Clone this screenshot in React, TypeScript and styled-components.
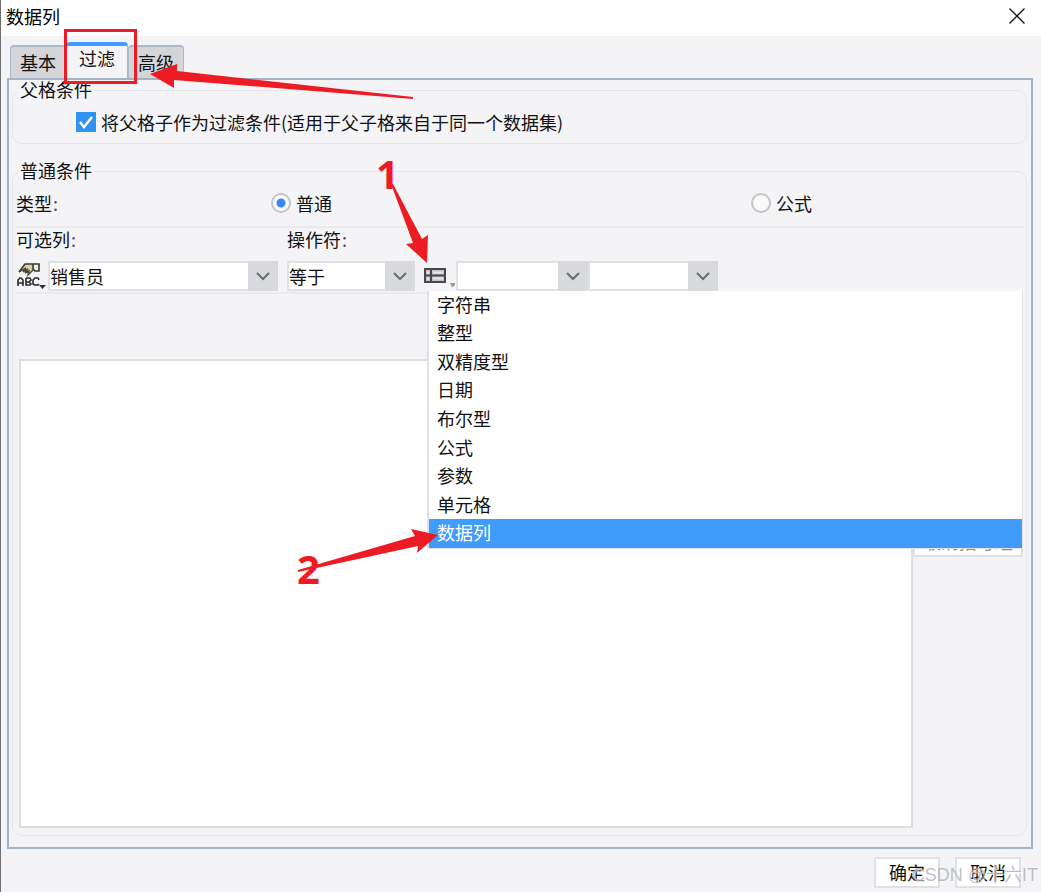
import React, { useState } from "react";
import styled, { createGlobalStyle } from "styled-components";

const RED = "#ed1c24";
const BLUE = "#409bfa";
const LINE = "#e4e5e8";

const GlobalStyle = createGlobalStyle`
  *, *::before, *::after { box-sizing: border-box; }
  body {
    margin: 0;
    background: #f4f4f7;
  }
  body, button, select, input {
    font-family: "Noto Sans CJK SC", sans-serif;
    font-size: 18px;
    line-height: 24px;
    color: #111;
  }
`;

const Window = styled.div`
  position: relative;
  display: flex;
  flex-direction: column;
  min-height: 100vh;
  border-left: 1px solid #6f6f72;
  overflow: hidden;
`;

const TitleBar = styled.header`
  display: flex;
  align-items: center;
  justify-content: space-between;
  height: 36px;
  padding: 0 16px 4px 5px;
  background: #fff;
  color: #000;
`;

const Title = styled.h1`
  margin: 0;
  font-size: 18px;
  font-weight: 400;
`;

const CloseButton = styled.button`
  display: flex;
  padding: 0;
  border: 0;
  background: none;
`;

const TabList = styled.div`
  display: flex;
  align-items: flex-end;
  height: 42px;
  padding-left: 9px;
`;

const Tab = styled.button<{ $active?: boolean }>`
  height: ${(p) => (p.$active ? 36 : 33)}px;
  padding: ${(p) => (p.$active ? "0 12px 8px" : "0 9px 1px")};
  border: 1px solid #a9b8cc;
  border-width: ${(p) => (p.$active ? "4px 1px 0" : "2px 1px 0")};
  border-top-color: ${(p) => (p.$active ? BLUE : "#a9b8cc")};
  border-radius: 4px 4px 0 0;
  background: ${(p) => (p.$active ? "#f4f4f7" : "#d5d5d9")};
`;

const Panel = styled.main`
  flex: 1;
  display: flex;
  flex-direction: column;
  gap: 18px;
  margin: 0 8px 0 6px;
  padding: 1px 4px 11px 3px;
  border: 2px solid #a3b3c8;
`;

const Group = styled.fieldset<{ $grow?: boolean }>`
  flex: ${(p) => (p.$grow ? "1" : "none")};
  min-width: 0;
  margin: 0;
  padding: 0 3px ${(p) => (p.$grow ? 7 : 11)}px;
  border: 1px solid ${LINE};
  border-radius: 10px;
`;

const Legend = styled.legend`
  margin-left: 1px;
  padding: 0 3px 2px;
  line-height: 16px;
`;

const CheckRow = styled.label`
  display: flex;
  align-items: center;
  gap: 5px;
  height: 20px;
  margin: 13px 0 0 60px;
`;

const CheckBox = styled.span`
  display: grid;
  width: 20px;
  height: 20px;

  & > * { grid-area: 1 / 1; }

  input {
    width: 20px;
    height: 20px;
    margin: 0;
    appearance: none;
    background: #fff;
    border: 1px solid #b9bbc0;
  }
  input:checked {
    background: #2f93f2;
    border-color: #2f93f2;
  }
  svg { pointer-events: none; }
`;

const TypeRow = styled.div`
  display: grid;
  grid-template-columns: 255px 480fr 272fr;
  align-items: center;
  height: 48px;
  padding-bottom: 1px;
  border-bottom: 2px solid #e9eaec;
`;

const RadioLabel = styled.label`
  display: flex;
  align-items: center;
  gap: 5px;
`;

const Radio = styled.input`
  width: 20px;
  height: 20px;
  margin: 0;
  appearance: none;
  border: 2px solid #c4c4c7;
  border-radius: 50%;
  background: #fafafb;
  &:checked {
    background: radial-gradient(circle, #3a86f2 0 4px, #fafafb 5px);
  }
`;

const Colon = styled.span`
  margin-left: 1px;
  color: #6b3a78;
`;

const FieldNames = styled.div`
  display: grid;
  grid-template-columns: 271px 1fr;
  height: 33px;
  line-height: 22px;
`;

const Controls = styled.div`
  position: relative;
  display: flex;
  height: 30px;
`;

const ControlsFrame = styled.div`
  padding-bottom: 1px;
  border-bottom: 2px solid #e9eaec;
`;

const IconButton = styled.button`
  display: flex;
  flex: none;
  align-items: center;
  justify-content: center;
  width: 32px;
  height: 30px;
  padding: 0;
  border: 0;
  background: none;
`;

const ComboBox = styled.span<{ $width: number; $gap?: number }>`
  display: grid;
  grid-template-columns: 1fr 30px;
  width: ${(p) => p.$width}px;
  margin-right: ${(p) => p.$gap ?? 0}px;

  select {
    grid-area: 1 / 1 / 2 / 3;
    width: 100%;
    height: 30px;
    padding: 0 30px 1px 0;
    border: 2px solid #e0e1e4;
    border-right-width: 0;
    border-radius: 0;
    background: #fff;
    appearance: none;
  }
`;

const ComboArrow = styled.span`
  grid-area: 1 / 2;
  display: flex;
  align-items: center;
  justify-content: center;
  background: #d8dade;
  pointer-events: none;
`;

const Menu = styled.ul`
  position: absolute;
  z-index: 1;
  top: 100%;
  left: 411px;
  right: 0;
  display: grid;
  grid-template-rows: repeat(9, 1fr);
  height: 258px;
  margin: 0;
  padding: 0;
  list-style: none;
  border: solid #dfe1e5;
  border-width: 0 1px 1px 2px;
  background: #fff;
`;

const MenuItem = styled.li`
  display: grid;
`;

const MenuButton = styled.button<{ $active: boolean }>`
  padding: 0 8px 3px;
  border: 0;
  text-align: left;
  background: ${(p) => (p.$active ? BLUE : "#fff")};
  color: ${(p) => (p.$active ? "#fff" : "#111")};
`;

const Body = styled.div`
  display: flex;
  min-height: calc(100vh - 423px);
  margin: 65px 0 0 3px;
`;

const ConditionList = styled.div`
  flex: 1;
  border: 2px solid #dddee2;
  background: #fff;
`;

const SideActions = styled.div`
  width: 110px;
  padding-top: 167px;
`;

const PlainButton = styled.button<{ $muted?: boolean }>`
  display: block;
  width: ${(p) => (p.$muted ? "100%" : "66px")};
  height: 31px;
  padding: 0 0 2px;
  border: 2px solid #e0e1e4;
  background: #fff;
  color: ${(p) => (p.$muted ? "#8a8a8c" : "#111")};
`;

const Footer = styled.footer`
  display: flex;
  justify-content: flex-end;
  gap: 15px;
  padding: 8px 20px 5px;
`;

const Watermark = styled.span`
  position: absolute;
  right: 3px;
  bottom: 6px;
  font-family: "Liberation Sans", "Noto Sans CJK SC", sans-serif;
  color: rgba(170, 170, 175, 0.75);
  text-shadow: 1px 1px 0 rgba(255, 255, 255, 0.6);
  pointer-events: none;
`;

const Marks = styled.svg`
  position: absolute;
  z-index: 2;
  top: 0;
  left: -1px;
  pointer-events: none;

  text {
    font: 700 40px "Open Sans", sans-serif;
  }
`;

const types = ["字符串", "整型", "双精度型", "日期", "布尔型", "公式", "参数", "单元格", "数据列"];

function Combo({ label, value, width, gap }: { label: string; value: string; width: number; gap?: number }) {
  return (
    <ComboBox $width={width} $gap={gap}>
      <select aria-label={label}>
        <option>{value}</option>
      </select>
      <ComboArrow>
        <svg width="16" height="10" viewBox="0 0 16 10" fill="none" stroke="#6b6c70" strokeWidth="2">
          <path d="M2 2l6 6 6-6" />
        </svg>
      </ComboArrow>
    </ComboBox>
  );
}

function TextTypeIcon() {
  return (
    <svg width="32" height="30" viewBox="0 0 32 30" fill="none">
      <path d="M4 10L10 3H17V10L12 13L8 10Z" fill="#dccdab" />
      <path d="M17 3H23V10H19L17 8Z" fill="#ececee" />
      <path d="M3 11L9 3H23V10H19L17 8V3" stroke="#3a3731" strokeWidth="1.6" />
      <path d="M3 11L10 7L7 11L12 8L9 12L13 10L12 14L17 9" stroke="#4c4334" strokeWidth="1.4" />
      <path
        d="M2 25V19L4 17H5L7 19V25M2 22H7M10 17V24H14L15 23L13 21L15 19L14 17H10M10 21H13M23 19L22 17H19L17 19V23L19 24H22L23 23"
        stroke="#2a2a2c"
        strokeWidth="1.6"
      />
      <path d="M23 24H30L26.500 28Z" fill="#333" />
    </svg>
  );
}

function ColumnTypeIcon() {
  return (
    <svg width="32" height="30" viewBox="0 0 32 30" fill="none">
      <rect x="1" y="8" width="20" height="13" fill="#c4c4c6" stroke="#48484b" strokeWidth="2" />
      <path d="M7 8V21M1 14.5H21" stroke="#48484b" strokeWidth="2" />
      <path d="M9 11.500H19M9 17.500H19" stroke="#e8e8ea" strokeWidth="2" />
      <path d="M3 11.500H5M3 17.500H5" stroke="#f4f4f7" strokeWidth="2" />
      <path d="M26 22H31V24L29 26H28Z" fill="#98999d" />
    </svg>
  );
}

export default function App() {
  const [linked, setLinked] = useState(true);
  const [mode, setMode] = useState("normal");
  const [type, setType] = useState("数据列");

  return (
    <>
      <GlobalStyle />
      <Window>
        <TitleBar>
          <Title>数据列</Title>
          <CloseButton aria-label="关闭">
            <svg width="16" height="16" viewBox="0 0 16 16" stroke="#111" strokeWidth="1.3">
              <path d="M0.5 0.5L15.5 15.5M15.5 0.5L0.5 15.5" />
            </svg>
          </CloseButton>
        </TitleBar>

        <TabList role="tablist">
          <Tab role="tab">基本</Tab>
          <Tab role="tab" aria-selected $active>过滤</Tab>
          <Tab role="tab">高级</Tab>
        </TabList>

        <Panel>
          <Group>
            <Legend>父格条件</Legend>
            <CheckRow>
              <CheckBox>
                <input type="checkbox" checked={linked} onChange={(e) => setLinked(e.target.checked)} />
                {linked && (
                  <svg width="20" height="20" viewBox="0 0 20 20" fill="none" stroke="#fff" strokeWidth="2.5">
                    <path d="M4 10l4 5 8-10" />
                  </svg>
                )}
              </CheckBox>
              将父格子作为过滤条件(适用于父子格来自于同一个数据集)
            </CheckRow>
          </Group>

          <Group $grow>
            <Legend>普通条件</Legend>
            <TypeRow>
              <span>类型<Colon>:</Colon></span>
              <RadioLabel>
                <Radio type="radio" name="mode" checked={mode === "normal"} onChange={() => setMode("normal")} />
                普通
              </RadioLabel>
              <RadioLabel>
                <Radio type="radio" name="mode" checked={mode === "formula"} onChange={() => setMode("formula")} />
                公式
              </RadioLabel>
            </TypeRow>
            <FieldNames>
              <span>可选列<Colon>:</Colon></span>
              <span>操作符<Colon>:</Colon></span>
            </FieldNames>
            <ControlsFrame>
              <Controls>
                <IconButton aria-label="列类型"><TextTypeIcon /></IconButton>
                <Combo label="可选列" value="销售员" width={230} gap={9} />
                <Combo label="操作符" value="等于" width={128} gap={9} />
                <IconButton aria-label="值类型"><ColumnTypeIcon /></IconButton>
                <Combo label="数据集" value="" width={132} />
                <Combo label="列" value="" width={130} />
                <Menu>
                  {types.map((t) => (
                    <MenuItem key={t}>
                      <MenuButton $active={t === type} onClick={() => setType(t)}>{t}</MenuButton>
                    </MenuItem>
                  ))}
                </Menu>
              </Controls>
            </ControlsFrame>
            <Body>
              <ConditionList />
              <SideActions>
                <PlainButton $muted>取消括号组</PlainButton>
              </SideActions>
            </Body>
          </Group>
        </Panel>

        <Footer>
          <PlainButton>确定</PlainButton>
          <PlainButton>取消</PlainButton>
        </Footer>

        <Watermark>CSDN @十六IT</Watermark>

        <Marks width="450" height="600" viewBox="0 0 450 600" fill={RED}>
          <rect x="65.5" y="30.5" width="70" height="52" fill="none" stroke={RED} strokeWidth="3" />
          <path d="M413 97L177 71L177 64L150 74L174 88L174 80L413 99Z" />
          <path d="M391 184L413 243L406 244L427 263L428 235L422 239L393 184Z" />
          <path d="M298 570L415 536L411 529L438 535L417 553L418 546L298 572Z" />
          <text x="376" y="189">1</text>
          <text x="297" y="584">2</text>
        </Marks>
      </Window>
    </>
  );
}
